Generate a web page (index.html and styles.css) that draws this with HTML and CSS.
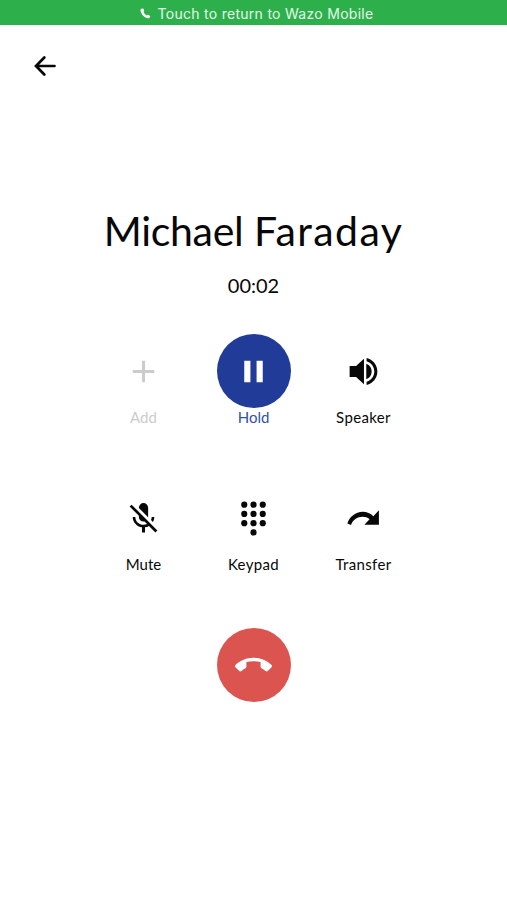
FILE: index.html
```html
<!DOCTYPE html>
<html lang="en">
<head>
<meta charset="utf-8">
<meta name="viewport" content="width=device-width, initial-scale=1">
<title>Call</title>
<link rel="stylesheet" href="styles.css">
</head>
<body>
<div class="return-bar">
  <svg class="return-icon" viewBox="0 0 12 12"><path d="M1.2 .8L3 .5Q3.6 .5 3.9 1.2L4.6 3Q4.7 3.6 3.8 4.4Q5 6.8 7.3 8.1Q8.2 7 8.8 7.3L10.8 8.5Q11.4 9 11.1 9.6Q10.2 11.6 8.2 11.2Q2.4 9.6.6 3.6Q.2 1.5 1.2 .8Z"/></svg>
  <span class="return-text">Touch to return to Wazo Mobile</span>
</div>
<header class="top">
  <svg class="back" viewBox="0 0 22 20"><path d="M20.5 10H2.5M10.3 1.5L2 10L10.3 18.5"/></svg>
</header>
<main class="call">
  <h1 class="name"><span class="first">Michael</span> <span class="last">Faraday</span></h1>
  <div class="time"><span>00:02</span></div>
  <div class="actions">
    <div class="action disabled">
      <div class="disc"><svg viewBox="0 0 24 24"><path d="M19 13h-6v6h-2v-6H5v-2h6V5h2v6h6z"/></svg></div>
      <span class="label add">Add</span>
    </div>
    <div class="action active">
      <div class="disc"><svg viewBox="0 0 24 24"><path d="M6 19h4V5H6zM14 5v14h4V5z"/></svg></div>
      <span class="label hold">Hold</span>
    </div>
    <div class="action">
      <div class="disc"><svg viewBox="0 0 24 24"><path d="M3 8.4v7.2h4.2l5.1 4.7V3.7L7.2 8.4zM17.3 12c0-2.3-1.2-4.2-3.5-5v10c2.3-.8 3.5-2.7 3.5-5zM14 3.2v2.1c2.89.86 5 3.54 5 6.71s-2.11 5.85-5 6.71v2.06c4.01-.91 7-4.49 7-8.77s-2.99-7.86-7-8.77z"/></svg></div>
      <span class="label wide">Speaker</span>
    </div>
    <div class="action">
      <div class="disc"><svg viewBox="0 0 24 24"><path d="M19 11c0 1.19-.34 2.3-.9 3.28l-1.23-1.23c.27-.62.43-1.31.43-2.05H19m-4 .16L9 5.18V5a3 3 0 0 1 6 0v6.16M4.27 3L21 19.73 19.73 21l-4.19-4.19c-.77.46-1.63.77-2.54.91V21h-2v-3.28C7.72 17.23 5 14.41 5 11h1.7c0 3 2.54 5.1 5.3 5.1.81 0 1.6-.19 2.31-.52l-1.66-1.66L12 14a3 3 0 0 1-3-3v-.72L3 4.27 4.27 3z"/></svg></div>
      <span class="label mute">Mute</span>
    </div>
    <div class="action">
      <div class="disc"><svg viewBox="0 0 24 24"><circle cx="6" cy="3" r="2"/><circle cx="12" cy="3" r="2"/><circle cx="18" cy="3" r="2"/><circle cx="6" cy="9" r="2"/><circle cx="12" cy="9" r="2"/><circle cx="18" cy="9" r="2"/><circle cx="6" cy="15" r="2"/><circle cx="12" cy="15" r="2"/><circle cx="18" cy="15" r="2"/><circle cx="12" cy="21" r="2"/></svg></div>
      <span class="label wide">Keypad</span>
    </div>
    <div class="action">
      <div class="disc"><svg viewBox="0 0 24 24"><path d="M18.4 10.6C16.55 8.8 14.15 7.7 11.5 7.7c-4.65 0-8.58 3.33-9.96 7.52L3.9 16.2c1.05-3.19 4.05-5.3 7.6-5.3 1.75 0 3.13.42 4.42 1.58L12.6 16H22V6.6z"/></svg></div>
      <span class="label wide">Transfer</span>
    </div>
    <div class="action hangup">
      <div class="disc"><svg viewBox="0 0 24 24"><path d="M12 9.2c-1.6 0-3.15.15-4.6.52v3.1c0 .39-.23.74-.56.9-.98.49-1.87 1.12-2.66 1.85-.18.18-.43.28-.7.28-.28 0-.53-.11-.71-.29L.29 13.08a.96.96 0 0 1-.29-.7c0-.28.11-.53.29-.71C3.34 8.78 7.46 7 12 7s8.66 1.78 11.71 4.67c.18.18.29.43.29.71 0 .28-.11.53-.29.71l-2.48 2.48c-.18.18-.43.29-.71.29-.27 0-.52-.11-.7-.28a11.3 11.3 0 0 0-2.67-1.85.996.996 0 0 1-.56-.9v-3.1C15.15 9.35 13.6 9.2 12 9.2z"/></svg></div>
    </div>
  </div>
</main>
</body>
</html>
```
FILE: styles.css
```css
body {
  margin: 0;
  background: #fff;
  color: #080808;
  font-family: Lato, sans-serif;
}
.return-bar {
  display: flex;
  align-items: center;
  justify-content: center;
  gap: 7px;
  height: 25px;
  padding: 2px 0 0 6px;
  box-sizing: border-box;
  background: #2db04b;
  color: #e4f8e8;
  font: 14px/20px Inter, sans-serif;
  letter-spacing: 0.28px;
}
.return-icon {
  width: 11px;
  height: 11px;
  fill: #fff;
}
.top {
  height: 80px;
  padding: 31px 0 0 34px;
  box-sizing: border-box;
}
.back {
  display: block;
  width: 22px;
  height: 20px;
  fill: none;
  stroke: #080808;
  stroke-width: 2.7;
  stroke-linecap: round;
}
.call {
  display: flex;
  flex-direction: column;
  align-items: center;
  padding-top: 101px;
}
.name {
  margin: 0;
  font-size: 41px;
  font-weight: 400;
  line-height: 50px;
  white-space: nowrap;
}
.first {
  letter-spacing: -0.3px;
}
.last {
  letter-spacing: 1.4px;
}
.time {
  margin-top: 16px;
  font-size: 20px;
  line-height: 26px;
}
.actions {
  display: grid;
  grid-template-columns: repeat(3, 110px);
  grid-auto-rows: 147px;
  margin-top: 36px;
}
.action {
  display: flex;
  flex-direction: column;
  align-items: center;
}
.hangup {
  grid-column: 2;
}
.disc {
  display: flex;
  align-items: center;
  justify-content: center;
  width: 74px;
  height: 74px;
  padding-top: 1px;
  box-sizing: border-box;
  border-radius: 50%;
}
.disc svg {
  width: 37px;
  height: 37px;
  fill: currentColor;
}
.label {
  margin-top: -1px;
  font-size: 15px;
  line-height: 20px;
}
.wide {
  letter-spacing: 0.35px;
}
.disabled {
  color: #ccc;
}
.active {
  color: #3350a8;
}
.active .disc {
  background: #203b98;
  color: #fff;
}
.hangup .disc {
  background: #db5450;
  color: #fff;
}
```
